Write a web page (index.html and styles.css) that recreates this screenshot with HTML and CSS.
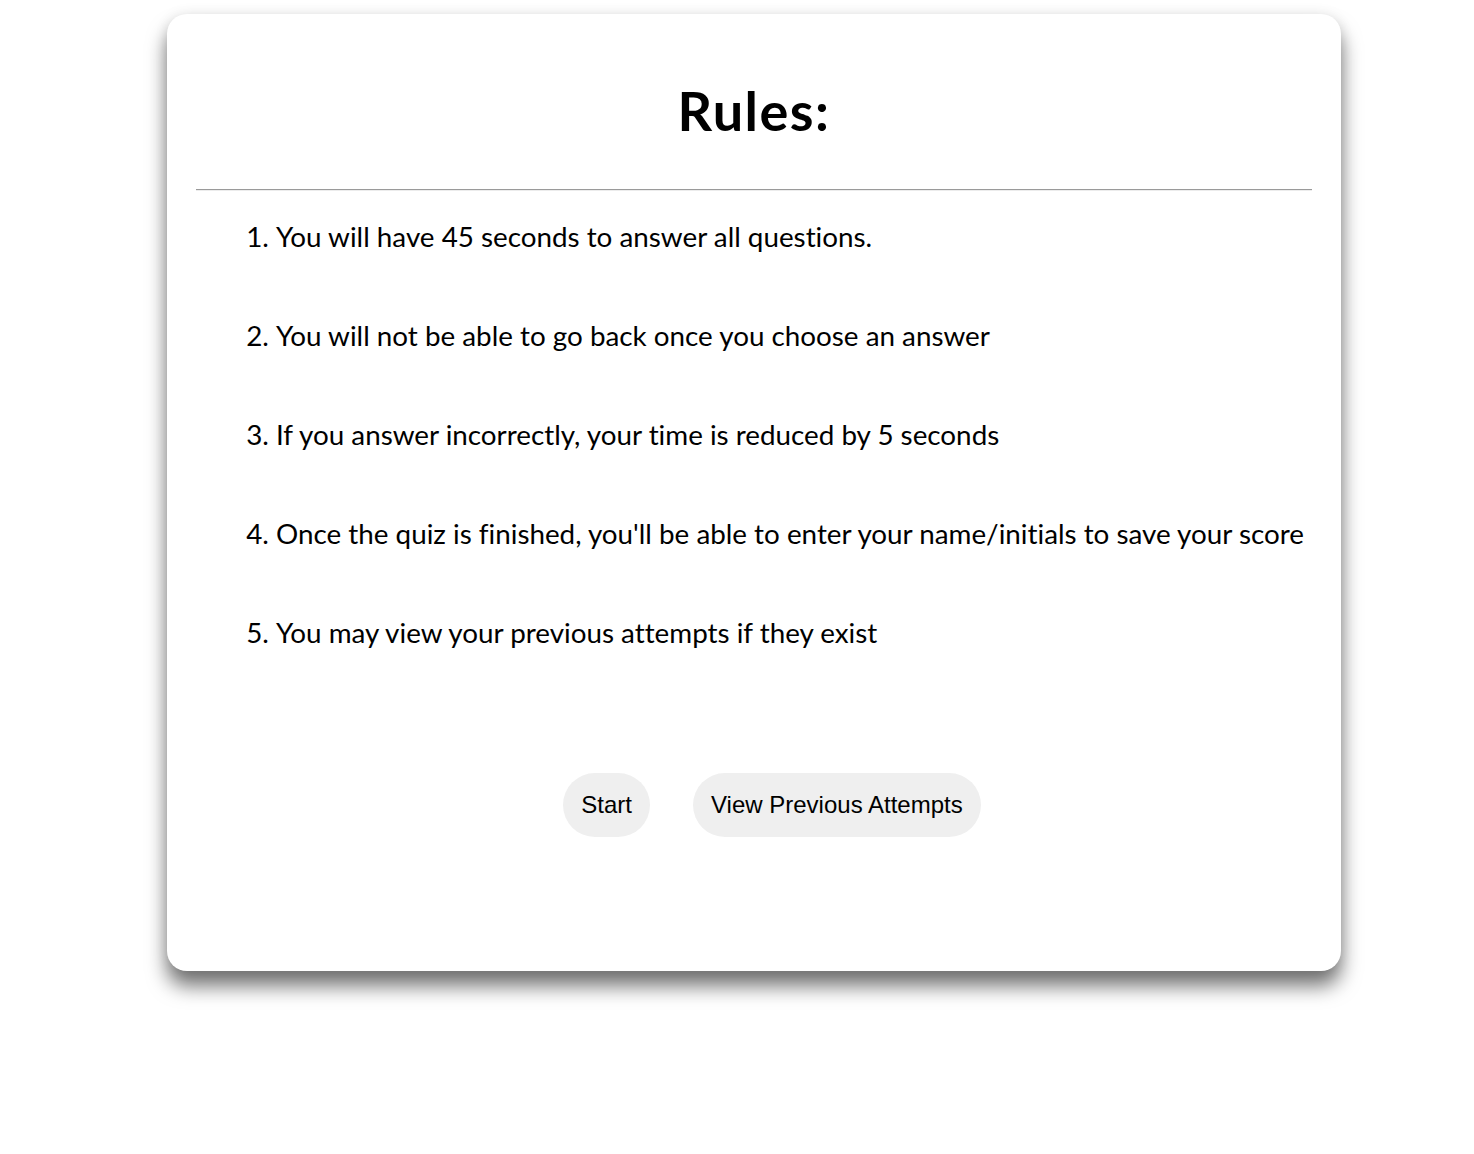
FILE: index.html
```html
<!DOCTYPE html>
<html>
<head>
<meta charset="utf-8">
<link rel="stylesheet" href="styles.css">
</head>
<body>
<div class="page">
  <main class="card">
    <h1 class="title">Rules:</h1>
    <hr class="divider">
    <ol class="rules">
      <li>You will have 45 seconds to answer all questions.</li>
      <li>You will not be able to go back once you choose an answer</li>
      <li>If you answer incorrectly, your time is reduced by 5 seconds</li>
      <li>Once the quiz is finished, you'll be able to enter your name/initials to save your score</li>
      <li>You may view your previous attempts if they exist</li>
    </ol>
    <div class="actions">
      <button class="btn">Start</button>
      <button class="btn">View Previous Attempts</button>
    </div>
  </main>
</div>
</body>
</html>
```
FILE: styles.css
```css
html, body {
  margin: 0;
  padding: 0;
  background: #ffffff;
}
body {
  font-family: Lato, "Noto Sans CJK KR", sans-serif;
  font-variant-ligatures: none;
  color: #000;
}
.page {
  padding: 14px 0 150px 167px;
}
.card {
  width: 1174px;
  height: 957px;
  box-sizing: border-box;
  background: #fff;
  border-radius: 20px;
  box-shadow: 0 15px 20px rgba(0, 0, 0, 0.55), 0 0 14px rgba(0, 0, 0, 0.08);
  padding: 1px 29px 0;
}
.title {
  margin: 64px 0 0;
  text-align: center;
  font-size: 54px;
  font-weight: 700;
  letter-spacing: 1.5px;
  line-height: 64px;
}
.divider {
  margin: 46px 0 0;
  border: 0;
  border-top: 1px solid #9a9a9a;
  border-bottom: 1px solid #ececec;
  height: 0;
}
.rules {
  margin: 26px 0 0;
  padding-left: 80px;
  font-size: 27.8px;
  line-height: 40px;
}
.rules li {
  margin-bottom: 59px;
}
.actions {
  display: flex;
  justify-content: center;
  gap: 43px;
  margin-top: 120px;
  padding-left: 36px;
}
.btn {
  font-family: "Liberation Sans", Arial, sans-serif;
  font-size: 24px;
  color: #000;
  background: #efefef;
  border: 0;
  border-radius: 32px;
  height: 64px;
  padding: 0 18px;
}
```
